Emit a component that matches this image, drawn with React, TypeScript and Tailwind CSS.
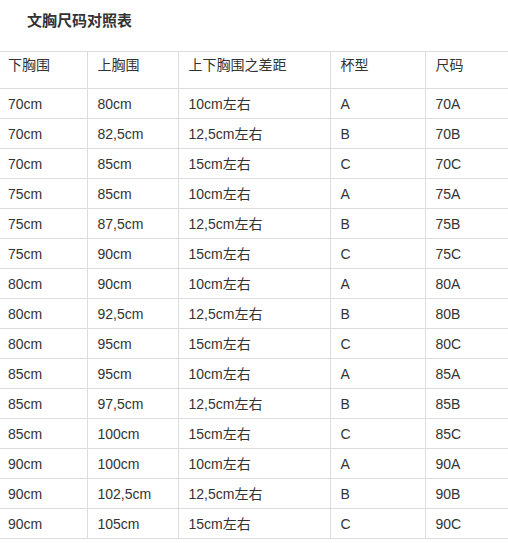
const rows: string[][] = [
  ['70cm', '80cm', '10cm左右', 'A', '70A'],
  ['70cm', '82,5cm', '12,5cm左右', 'B', '70B'],
  ['70cm', '85cm', '15cm左右', 'C', '70C'],
  ['75cm', '85cm', '10cm左右', 'A', '75A'],
  ['75cm', '87,5cm', '12,5cm左右', 'B', '75B'],
  ['75cm', '90cm', '15cm左右', 'C', '75C'],
  ['80cm', '90cm', '10cm左右', 'A', '80A'],
  ['80cm', '92,5cm', '12,5cm左右', 'B', '80B'],
  ['80cm', '95cm', '15cm左右', 'C', '80C'],
  ['85cm', '95cm', '10cm左右', 'A', '85A'],
  ['85cm', '97,5cm', '12,5cm左右', 'B', '85B'],
  ['85cm', '100cm', '15cm左右', 'C', '85C'],
  ['90cm', '100cm', '10cm左右', 'A', '90A'],
  ['90cm', '102,5cm', '12,5cm左右', 'B', '90B'],
  ['90cm', '105cm', '15cm左右', 'C', '90C'],
];

const headers = ['下胸围', '上胸围', '上下胸围之差距', '杯型', '尺码'];

export default function App() {
  return (
    <div className="w-[508px] h-[543px] overflow-hidden bg-white text-[#333] font-['Liberation_Sans','Noto_Sans_CJK_SC',sans-serif]">
      <div className="h-[51px] pl-[27px] pt-[11px] text-[15px] leading-5 font-bold text-[#333]">
        文胸尺码对照表
      </div>
      <table className="table-fixed border-collapse w-[520px] text-[14px] leading-5">
        <colgroup>
          <col className="w-[87px]" />
          <col className="w-[91px]" />
          <col className="w-[152px]" />
          <col className="w-[95px]" />
          <col className="w-[95px]" />
        </colgroup>
        <thead>
          <tr className="h-[37px]">
            {headers.map((h, i) => (
              <th
                key={h}
                className={`border border-[#ddd] align-top pt-[3px] text-left font-normal ${
                  i === 0 ? 'border-l-0 pl-[8px]' : 'pl-[10px]'
                }`}
              >
                {h}
              </th>
            ))}
          </tr>
        </thead>
        <tbody>
          {rows.map((r, ri) => (
            <tr key={ri} className="h-[30px]">
              {r.map((c, i) => (
                <td
                  key={i}
                  className={`border border-[#ddd] align-middle p-0 ${
                    i === 0 ? 'border-l-0 pl-[8px]' : 'pl-[10px]'
                  }`}
                >
                  {c}
                </td>
              ))}
            </tr>
          ))}
        </tbody>
      </table>
    </div>
  );
}
